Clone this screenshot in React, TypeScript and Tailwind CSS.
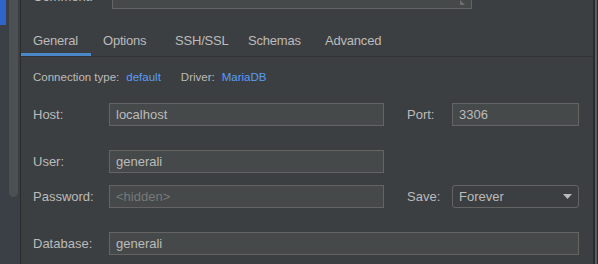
const tabs = [
  { label: "General", w: "w-[70px]" },
  { label: "Options", w: "w-[72px]" },
  { label: "SSH/SSL", w: "w-[73px]" },
  { label: "Schemas", w: "w-[77px]" },
  { label: "Advanced", w: "w-[80px]" },
];

function Field({ value, className, muted }: { value: string; className: string; muted?: boolean }) {
  return (
    <div
      className={`flex h-[23px] items-center border border-[#646464] bg-[#45494a] px-[6px] text-[13px] ${
        muted ? "text-[#787878]" : "text-[#bbbbbb]"
      } ${className}`}
    >
      {value}
    </div>
  );
}

export default function App() {
  return (
    <div className="flex h-[264px] w-[598px] overflow-hidden bg-[#3c3f41] font-['Liberation_Sans',sans-serif] text-[#bbbbbb]">
      {/* Left tree strip with scrollbar */}
      <div className="relative w-[20px] shrink-0 bg-[#3b3f46]">
        <div className="absolute left-0 top-0 h-[25px] w-[6px] bg-[#2f65ca]" />
        <div className="absolute left-[9px] top-0 h-[197px] w-[9px] rounded-b-full bg-[#4d5053]" />
      </div>
      <div className="w-px shrink-0 bg-[#2b2b2b]" />

      {/* Main panel */}
      <div className="flex min-w-0 flex-1 flex-col">
        {/* Comment row (cut off at top) */}
        <div className="-mt-[15px] flex h-[24px] items-center pl-[12px]">
          <span className="w-[79px] text-[13px]">Comment:</span>
          <div className="relative h-[24px] w-[360px] border border-[#646464] bg-[#45494a]">
            <svg className="absolute bottom-[2px] right-[5px]" width="7" height="7" viewBox="0 0 7 7">
              <path d="M1 1 L1 6 L6 6 Z" fill="#6e6e6e" />
            </svg>
          </div>
        </div>

        {/* Tabs */}
        <div className="mt-[17px] flex h-[31px] border-b border-[#323232]">
          {tabs.map((t, i) => (
            <div
              key={t.label}
              className={`flex items-center whitespace-nowrap pl-[12px] text-[13px] tracking-[-0.2px] ${t.w} ${
                i === 0 ? "border-b-[3px] border-[#4a88c7] pt-[3px]" : ""
              }`}
            >
              {t.label}
            </div>
          ))}
        </div>

        {/* Connection info */}
        <div className="mt-[12px] flex items-center pl-[12px] text-[11.5px]">
          <span>Connection type:</span>
          <span className="ml-[7px] text-[#589df6]">default</span>
          <span className="ml-[20px]">Driver:</span>
          <span className="ml-[7px] text-[#589df6]">MariaDB</span>
        </div>

        {/* Form */}
        <div className="mt-[17px] flex flex-col pl-[12px] text-[13px]">
          <div className="flex items-center">
            <span className="w-[76px]">Host:</span>
            <Field value="localhost" className="w-[275px]" />
            <span className="ml-[23px] w-[45px]">Port:</span>
            <Field value="3306" className="w-[127px]" />
          </div>
          <div className="mt-[24px] flex items-center">
            <span className="w-[76px]">User:</span>
            <Field value="generali" className="w-[275px]" />
          </div>
          <div className="mt-[12px] flex items-center">
            <span className="w-[76px]">Password:</span>
            <Field value="<hidden>" muted className="w-[275px]" />
            <span className="ml-[23px] w-[45px]">Save:</span>
            <div className="flex h-[23px] w-[127px] items-center justify-between rounded-[3px] border border-[#646464] bg-[#3c3f41] pl-[6px] pr-[6px]">
              <span>Forever</span>
              <svg width="9" height="5" viewBox="0 0 9 5">
                <path d="M0 0 L9 0 L4.5 5 Z" fill="#bbbbbb" />
              </svg>
            </div>
          </div>
          <div className="mt-[24px] flex items-center">
            <span className="w-[76px]">Database:</span>
            <Field value="generali" className="w-[470px]" />
          </div>
        </div>
      </div>

      {/* Right edge */}
      <div className="w-[2px] shrink-0 bg-[#2b2b2b]" />
      <div className="w-[2px] shrink-0 bg-[#5a5d5f]" />
      <div className="w-px shrink-0 bg-[#2b2b2b]" />
    </div>
  );
}
